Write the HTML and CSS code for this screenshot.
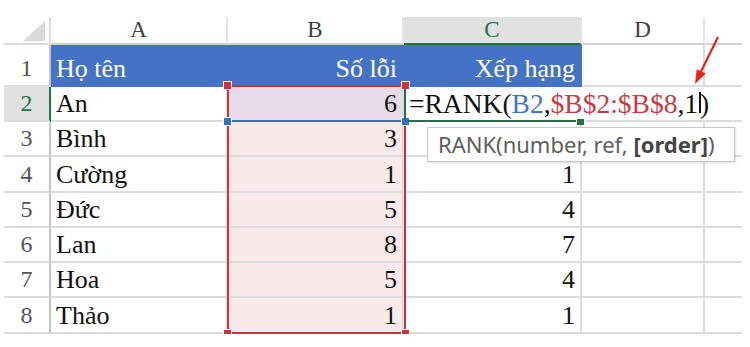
FILE: index.html
```html
<!DOCTYPE html>
<html lang="vi">
<head>
<meta charset="utf-8">
<link rel="stylesheet" href="styles.css">
</head>
<body>
<div class="sheet">
  <div class="cell corner"><span class="tri"></span></div>
  <div class="cell ch">A</div>
  <div class="cell ch">B</div>
  <div class="cell ch ch-sel">C</div>
  <div class="cell ch">D</div>
  <div class="cell ch last"></div>

  <div class="cell rh">1</div>
  <div class="cell hd">Họ tên</div>
  <div class="cell hd num">Số lỗi</div>
  <div class="cell hd num">Xếp hạng</div>
  <div class="cell"></div>
  <div class="cell last"></div>

  <div class="cell rh rh-sel">2</div>
  <div class="cell">An</div>
  <div class="cell num b-active">6</div>
  <div class="cell formula last"><span>=RANK(</span><span class="ref-b">B2</span><span>,</span><span class="ref-r">$B$2:$B$8</span><span>,1</span><span class="caret"></span><span>)</span></div>

  <div class="cell rh">3</div>
  <div class="cell">Bình</div>
  <div class="cell num b-range">3</div>
  <div class="cell num"></div>
  <div class="cell"></div>
  <div class="cell last"></div>

  <div class="cell rh">4</div>
  <div class="cell">Cường</div>
  <div class="cell num b-range">1</div>
  <div class="cell num">1</div>
  <div class="cell"></div>
  <div class="cell last"></div>

  <div class="cell rh">5</div>
  <div class="cell">Đức</div>
  <div class="cell num b-range">5</div>
  <div class="cell num">4</div>
  <div class="cell"></div>
  <div class="cell last"></div>

  <div class="cell rh">6</div>
  <div class="cell">Lan</div>
  <div class="cell num b-range">8</div>
  <div class="cell num">7</div>
  <div class="cell"></div>
  <div class="cell last"></div>

  <div class="cell rh">7</div>
  <div class="cell">Hoa</div>
  <div class="cell num b-range">5</div>
  <div class="cell num">4</div>
  <div class="cell"></div>
  <div class="cell last"></div>

  <div class="cell rh">8</div>
  <div class="cell">Thảo</div>
  <div class="cell num b-range">1</div>
  <div class="cell num">1</div>
  <div class="cell"></div>
  <div class="cell last"></div>

  <div class="range-box"></div>
  <div class="handle red h-tl"></div>
  <div class="handle red h-tr"></div>
  <div class="handle red h-bl"></div>
  <div class="handle red h-br"></div>
  <div class="blue-line"></div>
  <div class="handle blue h-ml"></div>
  <div class="handle blue h-mr"></div>
  <div class="edit-left"></div>
  <div class="edit-bottom"></div>
  <div class="handle green h-edit"></div>

  <div class="tooltip">RANK(number, ref, <b>[order]</b>)</div>

  <svg class="arrow" width="36" height="60" viewBox="0 0 36 60">
    <line x1="28" y1="7" x2="10.5" y2="42.5" stroke="#e8231f" stroke-width="2.2"/>
    <polygon points="5,54 15.7,43.6 6.7,39.2" fill="#e8231f"/>
  </svg>
</div>
</body>
</html>
```

FILE: styles.css
```css
body {
  margin: 0;
  background: #ffffff;
  font-family: "Liberation Serif", "Times New Roman", serif;
}

.sheet {
  position: relative;
  display: grid;
  grid-template-columns: 47px 177px 176px 178px 123px 37px;
  grid-template-rows: 28px 42px 35px 35px 36px 35px 35px 35px 36px;
  margin: 17px 0 0 4px;
  width: 738px;
}

.cell {
  box-sizing: border-box;
  border-right: 2px solid #dcdcdc;
  border-bottom: 2px solid #dcdcdc;
  display: flex;
  align-items: flex-end;
  padding: 0 5px;
  font-size: 26px;
  line-height: 33px;
  color: #111111;
  white-space: nowrap;
}

.cell.last {
  border-right: none;
}

.num {
  justify-content: flex-end;
}

.corner {
  position: relative;
  padding: 0;
}

.tri {
  position: absolute;
  left: 19px;
  top: 4px;
  width: 0;
  height: 0;
  border-left: 22px solid transparent;
  border-bottom: 20px solid #dadada;
}

.ch {
  justify-content: center;
  align-items: center;
  font-size: 23px;
  line-height: 26px;
  color: #404040;
  border-right-color: #e6e6e6;
  border-bottom-color: #d2d2d2;
}

.ch-sel {
  background: #e1e1e1;
  color: #217346;
  border-bottom-color: #217346;
}

.rh {
  justify-content: center;
  font-size: 24px;
  color: #555555;
  border-right-color: #c4c4c4;
}

.rh-sel {
  background: #e1e1e1;
  color: #217346;
  border-right-color: #217346;
}

.hd {
  background: #4472c4;
  color: #ffffff;
  border-color: #4472c4;
}

.b-active {
  background: #e6dbe6;
}

.b-range {
  background: #f9e9e9;
}

.formula {
  grid-column: span 3;
  font-size: 27.5px;
  line-height: 33px;
  padding-left: 5px;
  color: #111111;
  align-items: flex-end;
}

.ref-b {
  color: #3f74c9;
}

.ref-r {
  color: #c93a44;
}

.caret {
  display: inline-block;
  width: 2px;
  height: 21px;
  background: #111111;
  margin: 0 -1px 7px 1px;
  align-self: flex-end;
}

.range-box {
  position: absolute;
  left: 223px;
  top: 68px;
  width: 179px;
  height: 249px;
  box-sizing: border-box;
  border: 2px solid #c9343e;
}

.handle {
  position: absolute;
  width: 7px;
  height: 7px;
  box-shadow: 0 0 0 1px #ffffff;
}

.red { background: #c9343e; }
.blue { background: #3a6fc8; }
.green { background: #217346; }

.h-tl { left: 220px; top: 65px; }
.h-tr { left: 398px; top: 65px; }
.h-bl { left: 220px; top: 313px; }
.h-br { left: 398px; top: 313px; }
.h-ml { left: 220px; top: 101px; }
.h-mr { left: 398px; top: 101px; }

.blue-line {
  position: absolute;
  left: 223px;
  top: 103px;
  width: 179px;
  height: 2px;
  background: #3a6fc8;
}

.edit-left {
  position: absolute;
  left: 400px;
  top: 72px;
  width: 2px;
  height: 31px;
  background: #217346;
}

.edit-bottom {
  position: absolute;
  left: 404px;
  top: 103px;
  width: 170px;
  height: 2px;
  background: #217346;
}

.h-edit { left: 573px; top: 102px; width: 7px; height: 6px; }

.tooltip {
  position: absolute;
  left: 423px;
  top: 110px;
  width: 308px;
  height: 35px;
  box-sizing: border-box;
  border: 1px solid #c8c8c8;
  background: #ffffff;
  box-shadow: 1px 1px 2px rgba(0, 0, 0, 0.12);
  padding-left: 10px;
  font-family: "Noto Sans", "Open Sans", sans-serif;
  font-size: 22px;
  line-height: 32px;
  color: #5e5e5e;
  white-space: nowrap;
}

.tooltip b {
  color: #444444;
  font-weight: 700;
}

.arrow {
  position: absolute;
  left: 686px;
  top: 13px;
}
```
